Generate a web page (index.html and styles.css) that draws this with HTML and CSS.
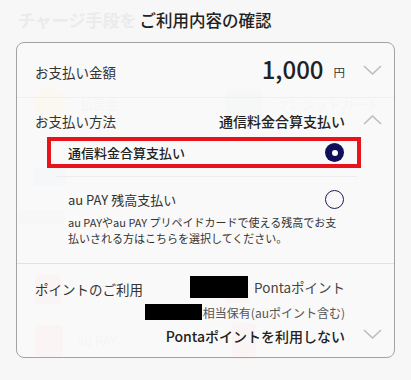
FILE: index.html
```html
<!DOCTYPE html>
<html lang="ja">
<head>
<meta charset="utf-8">
<title>ご利用内容の確認</title>
<link rel="stylesheet" href="styles.css">
</head>
<body>
<div class="screen">
  <div class="bg">
    <div class="bg-title">チャージ手段を</div>
    <div class="bg-row bg-r1">
      <div class="bg-item"><span class="ic ic-coin"></span><span class="bg-label">払戻金</span></div>
      <div class="bg-item"><span class="ic ic-card"></span><span class="bg-label">クレジットカード</span></div>
    </div>
    <div class="bg-row bg-r2">
      <div class="bg-item"><span class="ic ic-bank"></span></div>
    </div>
    <div class="bg-sec"><span class="ic ic-sec"></span></div>
    <div class="bg-row bg-r3">
      <div class="bg-item"><span class="ic ic-paypay"></span></div>
      <div class="bg-item"><span class="ic ic-rpay"></span></div>
    </div>
    <div class="bg-row bg-r4">
      <div class="bg-item"><span class="ic ic-au"></span><span class="bg-label">au PAY</span></div>
      <div class="bg-item"><span class="ic ic-mer"></span></div>
    </div>
  </div>

  <div class="modal">
    <h1 class="modal-title">ご利用内容の確認</h1>
    <div class="card">
      <div class="row row-amount">
        <span class="label">お支払い金額</span>
        <span class="amount">1,000</span><span class="yen">円</span>
        <svg class="chev" width="19" height="10" viewBox="0 0 19 10"><path d="M1 1 L9.5 9 L18 1" /></svg>
      </div>

      <div class="row-method">
        <div class="method-head">
          <span class="label">お支払い方法</span>
          <span class="value">通信料金合算支払い</span>
          <svg class="chev" width="19" height="10" viewBox="0 0 19 10"><path d="M1 9 L9.5 1 L18 9" /></svg>
        </div>
        <div class="options">
          <div class="opt opt-sel">
            <span class="opt-text strong">通信料金合算支払い</span>
            <span class="radio radio-on"></span>
          </div>
          <div class="opt-divider"></div>
          <div class="opt opt-plain">
            <span class="opt-text">au PAY 残高支払い</span>
            <span class="radio"></span>
          </div>
          <p class="opt-desc">au PAYやau PAY プリペイドカードで使える残高でお支払いされる方はこちらを選択してください。</p>
        </div>
      </div>

      <div class="row-points">
        <span class="label">ポイントのご利用</span>
        <div class="points">
          <div class="pline pline-1"><span class="redact r1"></span><span class="ptext">Pontaポイント</span></div>
          <div class="pline pline-2"><span class="redact r2"></span><span class="psub">相当保有(auポイント含む)</span></div>
          <div class="pline pline-3"><span class="value">Pontaポイントを利用しない</span>
            <svg class="chev" width="19" height="10" viewBox="0 0 19 10"><path d="M1 1 L9.5 9 L18 1" /></svg>
          </div>
        </div>
      </div>
    </div>
  </div>
</div>
</body>
</html>
```

FILE: styles.css
```css
* { box-sizing: border-box; }
html, body { margin: 0; padding: 0; }
body {
  width: 411px;
  height: 380px;
  overflow: hidden;
  background: #f7f7f7;
  font-family: "Noto Sans CJK JP", "Noto Sans", sans-serif;
  color: #333;
}
.screen { position: relative; width: 411px; height: 380px; }

/* faded page underneath */
.bg { padding: 9px 0 0 0; }
.bg-title {
  margin-left: 18px;
  font-size: 17px;
  line-height: 22px;
  font-weight: 700;
  color: #ebebeb;
}
.bg-row { display: grid; grid-template-columns: 192px 1fr; padding-left: 33px; }
.bg-item { display: flex; align-items: center; gap: 14px; }
.bg-label { font-size: 13px; line-height: 14px; color: #ededed; }
.bg-r1 { margin-top: 56px; height: 34px; }
.ic { display: inline-block; flex: none; }
.ic-coin { width: 33px; height: 33px; border-radius: 50%; background: #faf4e6; }
.ic-card { width: 37px; height: 30px; border-radius: 3px; background: #eef3f2; }
.bg-r2 { margin-top: 45px; height: 22px; }
.ic-bank { width: 33px; height: 18px; background: #f0f1f3; }
.bg-sec { margin-top: 19px; margin-left: 18px; height: 20px; display: flex; align-items: center; }
.ic-sec { width: 46px; height: 14px; border-radius: 2px; background: #f1f1f1; }
.bg-r3 { margin-top: 46px; height: 32px; padding-left: 35px; grid-template-columns: 190px 1fr; }
.ic-paypay { width: 26px; height: 30px; border-radius: 4px; background: #f9eaea; }
.ic-rpay { width: 24px; height: 28px; border-radius: 4px; background: #f9eaea; }
.bg-r4 { margin-top: 16px; height: 40px; padding-left: 35px; grid-template-columns: 197px 1fr; }
.ic-au { width: 28px; height: 32px; border-radius: 4px; background: #f8eceb; }
.ic-mer { width: 24px; height: 36px; border-radius: 4px; background: #f8ecee; }

/* modal */
.modal { position: absolute; left: 0; top: 0; right: 0; bottom: 0; }
.modal-title {
  margin: 0 auto;
  width: max-content;
  padding-top: 9px;
  text-align: center;
  font-size: 16.5px;
  line-height: 22px;
  font-weight: 500;
  color: #222;
}
.card {
  margin: 11px 16px 0 16px;
  border: 1px solid #a3a3a3;
  border-radius: 8px;
  background: rgba(252, 252, 252, 0.55);
}
.label { font-size: 13.5px; color: #333; line-height: 22px; }
.chev { flex: none; }
.chev path { fill: none; stroke: #bdbdbd; stroke-width: 1.6; }

.row { display: flex; align-items: center; padding: 0 12px 0 18px; }
.row-amount { height: 55px; border-bottom: 1px solid #efefef; padding-top: 3px; }
.row-amount .label { flex: 1; }
.amount { font-size: 24px; font-weight: 500; color: #222; line-height: 28px; margin-top: -5px; }
.yen { font-size: 11.5px; margin-left: 10px; color: #333; }
.row-amount .chev { margin-left: 18px; margin-top: -4px; }

.row-method { padding-bottom: 17px; border-bottom: 1px solid #e2e2e2; }
.method-head { display: flex; align-items: center; padding: 12px 12px 0 18px; }
.method-head .label { flex: 1; }
.value { font-size: 14px; font-weight: 500; color: #222; line-height: 22px; }
.method-head .chev { margin-left: 18px; margin-top: -2px; }

.options { margin: 5px 33px 0 30px; }
.opt { display: flex; align-items: center; justify-content: space-between; }
.opt-sel { border: 4px solid #e8141c; height: 31px; padding: 0 13px 0 17px; }
.opt-plain { margin-top: 10px; height: 24px; padding: 0 17px 0 21px; }
.opt-text { font-size: 13px; color: #333; }
.opt-text.strong { font-weight: 500; color: #222; }
.opt-divider { height: 1px; background: #ededed; margin: 8px 4px 0 8px; }
.radio {
  width: 19px; height: 19px; border-radius: 50%;
  border: 1.2px solid #1b1b60;
  flex: none;
}
.radio-on { border: none; background: #10105a; position: relative; }
.radio-on::after {
  content: ""; position: absolute; left: 6.5px; top: 6.5px;
  width: 6px; height: 6px; border-radius: 50%; background: #fff;
}
.opt-desc {
  margin: 3px 0 0 0;
  padding: 0 17px 0 21px;
  font-size: 11px;
  line-height: 16px;
  color: #333;
}

.row-points { display: flex; align-items: flex-start; padding: 12px 12px 10px 18px; }
.row-points .label { margin-top: 2px; }
.points { flex: 1; display: flex; flex-direction: column; align-items: flex-end; }
.pline { display: flex; align-items: center; }
.pline-1 { margin-right: 37px; height: 22px; }
.pline-2 { margin-right: 37px; height: 16px; margin-top: 6px; }
.pline-3 { margin-top: 5px; height: 22px; }
.pline-3 .chev { margin-left: 18px; margin-top: -4px; }
.redact { display: inline-block; background: #000; }
.r1 { width: 58px; height: 22px; margin-right: 6px; }
.r2 { width: 57px; height: 16px; margin-right: 1px; }
.ptext { font-size: 13.5px; color: #444; }
.psub { font-size: 12px; color: #555; }
```
